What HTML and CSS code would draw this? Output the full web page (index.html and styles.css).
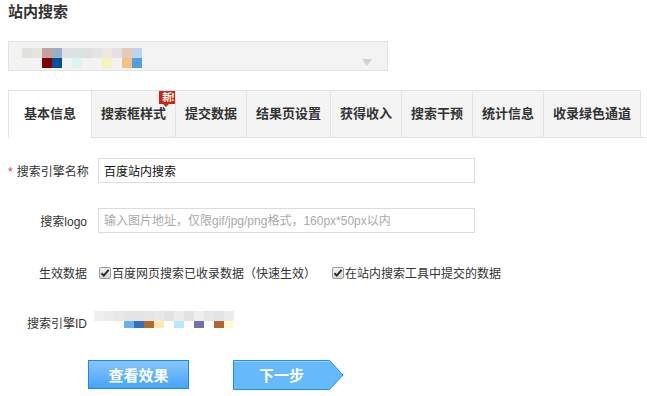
FILE: index.html
```html
<!DOCTYPE html>
<html lang="zh-CN">
<head>
    <meta charset="UTF-8" />
    <title>站内搜索</title>
    <link rel="stylesheet" href="styles.css">
</head>
<body>

    <h1 class="page-title">站内搜索</h1>

    <div class="site-select">
        <svg class="mosaic" width="120" height="20" viewBox="0 0 120 20">
            <rect x="0" y="0" width="10" height="10" fill="#e0e0dc"/>
            <rect x="10" y="0" width="10" height="10" fill="#e4e4e0"/>
            <rect x="20" y="0" width="10" height="10" fill="#c8a0a0"/>
            <rect x="30" y="0" width="10" height="10" fill="#98b0c8"/>
            <rect x="40" y="0" width="10" height="10" fill="#e0e0e4"/>
            <rect x="50" y="0" width="10" height="10" fill="#dce4e0"/>
            <rect x="60" y="0" width="10" height="10" fill="#e0e0e0"/>
            <rect x="70" y="0" width="10" height="10" fill="#e4e4e4"/>
            <rect x="80" y="0" width="10" height="10" fill="#ece8dc"/>
            <rect x="90" y="0" width="10" height="10" fill="#e4e0e4"/>
            <rect x="100" y="0" width="10" height="10" fill="#e4ccb4"/>
            <rect x="110" y="0" width="10" height="10" fill="#bcd4ec"/>
            <rect x="20" y="10" width="10" height="10" fill="#800000"/>
            <rect x="30" y="10" width="10" height="10" fill="#0050a0"/>
            <rect x="50" y="10" width="10" height="10" fill="#dcf4f4"/>
            <rect x="80" y="10" width="10" height="10" fill="#f4f4bc"/>
            <rect x="100" y="10" width="10" height="10" fill="#f4c084"/>
            <rect x="110" y="10" width="10" height="10" fill="#50a0e0"/>
        </svg>
        <span class="caret"></span>
    </div>

    <ul class="tabs">
        <li class="tab active">基本信息</li>
        <li class="tab">搜索框样式<span class="badge-new">新!</span></li>
        <li class="tab">提交数据</li>
        <li class="tab">结果页设置</li>
        <li class="tab">获得收入</li>
        <li class="tab">搜索干预</li>
        <li class="tab">统计信息</li>
        <li class="tab last">收录绿色通道</li>
    </ul>

    <form class="engine-form" autocomplete="off">
        <div class="form-row row-name">
            <label class="field-label" for="engineName"><em class="required">*</em>搜索引擎名称</label>
            <input class="text-input" type="text" id="engineName" value="百度站内搜索" />
        </div>

        <div class="form-row row-logo">
            <label class="field-label" for="engineLogo">搜索logo</label>
            <input class="text-input" type="text" id="engineLogo" placeholder="输入图片地址，仅限gif/jpg/png格式，160px*50px以内" />
        </div>

        <div class="form-row row-data">
            <span class="field-label">生效数据</span>
            <div class="checks">
                <label class="check">
                    <span class="check-box">
                        <svg width="10" height="10" viewBox="0 0 10 10"><path d="M1.5 5.2 L3.8 7.6 L8.6 1.8" fill="none" stroke="#2b2b2b" stroke-width="2"/></svg>
                    </span>百度网页搜索已收录数据（快速生效）
                </label>
                <label class="check">
                    <span class="check-box">
                        <svg width="10" height="10" viewBox="0 0 10 10"><path d="M1.5 5.2 L3.8 7.6 L8.6 1.8" fill="none" stroke="#2b2b2b" stroke-width="2"/></svg>
                    </span>在站内搜索工具中提交的数据
                </label>
            </div>
        </div>

        <div class="form-row row-id">
            <span class="field-label">搜索引擎ID</span>
            <svg class="mosaic id-mosaic" width="140" height="17" viewBox="0 0 140 17">
                <rect x="0" y="0" width="10" height="10" fill="#f0f0f0"/>
                <rect x="10" y="0" width="10" height="10" fill="#ececec"/>
                <rect x="20" y="0" width="10" height="10" fill="#e8e8e8"/>
                <rect x="30" y="0" width="10" height="10" fill="#e4e4e4"/>
                <rect x="40" y="0" width="10" height="10" fill="#e4e4e4"/>
                <rect x="50" y="0" width="10" height="10" fill="#e6e6e6"/>
                <rect x="60" y="0" width="10" height="10" fill="#e8e8e8"/>
                <rect x="70" y="0" width="10" height="10" fill="#e2e2e2"/>
                <rect x="80" y="0" width="10" height="10" fill="#ececec"/>
                <rect x="90" y="0" width="10" height="10" fill="#e2e2e2"/>
                <rect x="100" y="0" width="10" height="10" fill="#eeeeee"/>
                <rect x="110" y="0" width="10" height="10" fill="#e6e6e6"/>
                <rect x="120" y="0" width="10" height="10" fill="#e4e4e4"/>
                <rect x="130" y="0" width="10" height="10" fill="#ececec"/>
                <rect x="30" y="10" width="10" height="7" fill="#6cb0e8"/>
                <rect x="40" y="10" width="10" height="7" fill="#3470b8"/>
                <rect x="50" y="10" width="10" height="7" fill="#b06830"/>
                <rect x="60" y="10" width="10" height="7" fill="#fce8b0"/>
                <rect x="80" y="10" width="10" height="7" fill="#b4e8fc"/>
                <rect x="100" y="10" width="10" height="7" fill="#7070b0"/>
                <rect x="120" y="10" width="10" height="7" fill="#b06830"/>
                <rect x="130" y="10" width="10" height="7" fill="#fcfcd0"/>
            </svg>
        </div>

        <div class="form-actions">
            <button type="button" class="btn-preview">查看效果</button>
            <button type="button" class="btn-next">
                <svg class="arrow-shape" width="111" height="30" viewBox="0 0 111 30">
                    <path d="M0.5 0.5 H96.5 L110 15 L96.5 29.5 H0.5 Z" fill="#66b9fb" stroke="#1f8fe8"/>
                    <path d="M1.5 1.5 H96" stroke="#9fd3ff" fill="none"/>
                </svg>
                <span class="btn-text">下一步</span>
            </button>
        </div>
    </form>

</body>
</html>
```

FILE: styles.css
```css
* {
    box-sizing: border-box;
    margin: 0;
    padding: 0;
}

body {
    font-family: "Liberation Sans", "Noto Sans CJK SC", sans-serif;
    font-size: 12px;
    color: #333;
    background: #fff;
    padding: 0 0 0 8px;
    width: 647px;
}

.page-title {
    font-size: 15px;
    font-weight: bold;
    line-height: 23px;
    color: #333;
}

/* site dropdown */
.site-select {
    margin-top: 18px;
    width: 380px;
    height: 30px;
    background: #f3f3f3;
    border: 1px solid #e2e2e2;
    display: flex;
    align-items: flex-start;
    justify-content: space-between;
    padding: 6px 15px 0 13px;
}

.mosaic {
    display: block;
}

.caret {
    margin-top: 11px;
    width: 0;
    height: 0;
    border-left: 5px solid transparent;
    border-right: 5px solid transparent;
    border-top: 7px solid #d2d2d2;
}

/* tabs */
.tabs {
    list-style: none;
    display: flex;
    margin-top: 19px;
    border-bottom: 1px solid #e2e2e2;
}

.tab {
    position: relative;
    height: 48px;
    line-height: 46px;
    padding: 0 9px;
    margin-bottom: -1px;
    background: #f4f4f4;
    border: 1px solid #e2e2e2;
    border-right: none;
    font-weight: bold;
    font-size: 13px;
    color: #333;
    white-space: nowrap;
}

.tab.active {
    background: #fff;
    padding: 0 15px;
    border-bottom-color: #fff;
}

.tab.last {
    border-right: 1px solid #e2e2e2;
}

.badge-new {
    position: absolute;
    top: 0;
    right: -2px;
    width: 18px;
    height: 13px;
    background: #c9260d;
    color: #fff;
    font-size: 10px;
    line-height: 13px;
    text-align: center;
    font-weight: bold;
    letter-spacing: -1px;
}

.badge-new::after {
    content: "";
    position: absolute;
    left: 4px;
    bottom: -3px;
    border-left: 3px solid transparent;
    border-right: 3px solid transparent;
    border-top: 3px solid #c9260d;
}

/* form */
.form-row {
    display: grid;
    grid-template-columns: 79px auto;
    column-gap: 11px;
    align-items: center;
    height: 25px;
}

.row-name { margin-top: 20px; }
.row-logo { margin-top: 25px; }
.row-data { margin-top: 27px; }
.row-id { margin-top: 25px; }

.field-label {
    text-align: right;
    white-space: nowrap;
    color: #333;
    font-size: 12px;
}

.required {
    font-style: normal;
    color: #e4393c;
    margin-right: 4px;
}

.text-input {
    width: 377px;
    height: 25px;
    border: 1px solid #dcdcdc;
    padding: 0 5px;
    font-family: inherit;
    font-size: 12px;
    color: #111;
    outline: none;
}

.text-input::placeholder {
    color: #aaa;
}

.checks {
    display: flex;
    gap: 15px;
}

.check {
    display: flex;
    align-items: center;
    white-space: nowrap;
}

.check-box {
    display: inline-flex;
    align-items: center;
    justify-content: center;
    width: 12px;
    height: 12px;
    margin: 0 1px;
    border: 1px solid #9a9a9a;
    border-radius: 2px;
    background: linear-gradient(#f4f4f4, #d8d8d8);
}

.id-mosaic {
    align-self: start;
    margin-top: 1px;
    margin-left: -4px;
}

/* buttons */
.form-actions {
    display: flex;
    margin-top: 25px;
    padding-left: 80px;
}

.btn-preview {
    width: 101px;
    height: 29px;
    border: 1px solid #1a8aea;
    background: linear-gradient(#86c7fd, #48a3f9);
    color: #fff;
    font-family: inherit;
    font-size: 15px;
    font-weight: bold;
    cursor: pointer;
}

.btn-next {
    position: relative;
    margin-left: 44px;
    width: 111px;
    height: 30px;
    border: none;
    background: none;
    color: #fff;
    font-family: inherit;
    font-size: 15px;
    font-weight: bold;
    cursor: pointer;
}

.arrow-shape {
    position: absolute;
    top: 0;
    left: 0;
}

.btn-text {
    position: relative;
    display: block;
    width: 97px;
    line-height: 29px;
    text-align: center;
}
```
